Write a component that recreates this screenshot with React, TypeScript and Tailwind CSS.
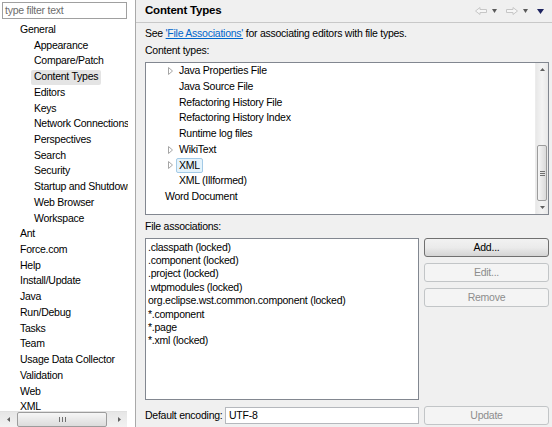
import React from 'react';

const prefs: [string, number][] = [
    ['General', 0],
    ['Appearance', 1],
    ['Compare/Patch', 1],
    ['Content Types', 1],
    ['Editors', 1],
    ['Keys', 1],
    ['Network Connections', 1],
    ['Perspectives', 1],
    ['Search', 1],
    ['Security', 1],
    ['Startup and Shutdown', 1],
    ['Web Browser', 1],
    ['Workspace', 1],
    ['Ant', 0],
    ['Force.com', 0],
    ['Help', 0],
    ['Install/Update', 0],
    ['Java', 0],
    ['Run/Debug', 0],
    ['Tasks', 0],
    ['Team', 0],
    ['Usage Data Collector', 0],
    ['Validation', 0],
    ['Web', 0],
    ['XML', 0],
];

// [label, level, hasChildren]
const contentTypes: [string, number, boolean][] = [
    ['Java Properties File', 1, true],
    ['Java Source File', 1, false],
    ['Refactoring History File', 1, false],
    ['Refactoring History Index', 1, false],
    ['Runtime log files', 1, false],
    ['WikiText', 1, true],
    ['XML', 1, true],
    ['XML (Illformed)', 1, false],
    ['Word Document', 0, false],
];

const associations = [
    '.classpath (locked)',
    '.component (locked)',
    '.project (locked)',
    '.wtpmodules (locked)',
    'org.eclipse.wst.common.component (locked)',
    '*.component',
    '*.page',
    '*.xml (locked)',
];

function Expander() {
    return (
        <svg width="5" height="8" viewBox="0 0 5 8" className="shrink-0">
            <polygon points="0.5,0.5 4.5,4 0.5,7.5" fill="#ffffff" stroke="#a6a6a6" strokeWidth="1" />
        </svg>
    );
}

function NavArrow({ dir }: { dir: 'left' | 'right' }) {
    const d = dir === 'left'
        ? 'M0.5,4 L5,0.5 L5,2.5 L11.5,2.5 L11.5,5.5 L5,5.5 L5,7.5 Z'
        : 'M11.5,4 L7,0.5 L7,2.5 L0.5,2.5 L0.5,5.5 L7,5.5 L7,7.5 Z';
    return (
        <svg width="12" height="8" viewBox="0 0 12 8">
            <path d={d} fill="#f6f6f6" stroke="#c6c6c6" strokeWidth="1" strokeLinejoin="round" />
        </svg>
    );
}

function SmallDown({ color = '#5a5a5a', w = 5 }: { color?: string; w?: number }) {
    return (
        <svg width={w} height={Math.ceil(w / 2) + 1} viewBox={`0 0 ${w} ${Math.ceil(w / 2) + 1}`}>
            <polygon points={`0,0 ${w},0 ${w / 2},${Math.ceil(w / 2) + 1}`} fill={color} />
        </svg>
    );
}

function HScrollbar() {
    return (
        <div className="flex h-[16px] w-[127px] bg-gradient-to-b from-[#e6e6e6] to-[#f2f2f2] border-t border-[#e0e0e0]">
            <div className="w-[17px] flex items-center justify-center">
                <svg width="3" height="5" viewBox="0 0 3 5"><polygon points="3,0 3,5 0,2.5" fill="#606060" /></svg>
            </div>
            <div className="w-[90px] h-[15px] rounded-[2px] border border-[#9c9c9c] bg-gradient-to-b from-[#f6f6f6] to-[#dcdcdc] flex items-center justify-center gap-[2px]">
                <div className="w-px h-[5px] bg-[#707070]" />
                <div className="w-px h-[5px] bg-[#707070]" />
                <div className="w-px h-[5px] bg-[#707070]" />
            </div>
            <div className="flex-1 flex items-center justify-end pr-[6px]">
                <svg width="3" height="5" viewBox="0 0 3 5"><polygon points="0,0 0,5 3,2.5" fill="#606060" /></svg>
            </div>
        </div>
    );
}

function VScrollbar() {
    return (
        <div className="w-[13px] flex flex-col bg-gradient-to-r from-[#e8e8e8] via-[#f4f4f4] to-[#e8e8e8] border-l border-[#ececec]">
            <div className="h-[13px] flex items-center justify-center">
                <svg width="5" height="3" viewBox="0 0 5 3"><polygon points="0,3 5,3 2.5,0" fill="#606060" /></svg>
            </div>
            <div className="flex-1" />
            <div className="h-[56px] mx-px rounded-[2px] border border-[#9c9c9c] bg-gradient-to-r from-[#f6f6f6] to-[#dadada] flex flex-col items-center justify-center gap-[1px]">
                <div className="h-px w-[5px] bg-[#707070]" />
                <div className="h-px w-[5px] bg-[#707070]" />
                <div className="h-px w-[5px] bg-[#707070]" />
            </div>
            <div className="h-[13px] flex items-center justify-center">
                <svg width="5" height="3" viewBox="0 0 5 3"><polygon points="0,0 5,0 2.5,3" fill="#606060" /></svg>
            </div>
        </div>
    );
}

function Button({ label, disabled }: { label: string; disabled?: boolean }) {
    return (
        <div
            className={
                disabled
                    ? 'h-[19px] rounded-[3px] border border-[#c2c5c7] bg-[#f4f4f4] text-[#8d8d8d] flex items-center justify-center'
                    : 'h-[19px] rounded-[3px] border border-[#707070] bg-gradient-to-b from-[#f2f2f2] via-[#ebebeb] to-[#d4d4d4] text-black flex items-center justify-center'
            }
        >
            {label}
        </div>
    );
}

export default function App() {
    return (
        <div className="flex h-[427px] w-[552px] overflow-hidden bg-[#f0f0f0] text-[10.5px] tracking-[-0.25px] text-black font-['Liberation_Sans',Arial,sans-serif]">
            {/* left: preference tree */}
            <div className="w-[136px] shrink-0 bg-white border-r border-[#a9a9a9] flex flex-col">
                <div className="mt-[2px] ml-[2px] w-[125px] h-[17px] border border-[#a0a0a0] flex items-center pl-[2px] text-[#6d6d6d]">
                    type filter text
                </div>
                <div className="mt-[3px] w-[128px] h-[392px] overflow-hidden">
                    {prefs.map(([name, level]) => (
                        <div key={name} className={`h-[15.72px] flex items-center whitespace-nowrap ${level === 0 ? 'pl-[20px]' : 'pl-[31px]'}`}>
                            {name === 'Content Types' ? (
                                <span className="h-[15px] flex items-center px-[3px] bg-[#e4e4e4] rounded-[2px]">{name}</span>
                            ) : (
                                <span className={level === 1 ? 'pl-[3px]' : ''}>{name}</span>
                            )}
                        </div>
                    ))}
                </div>
                <HScrollbar />
            </div>

            {/* right: page */}
            <div className="flex-1 flex flex-col">
                <div className="h-[23px] border-b border-[#c8c8c8] flex items-center pl-[9px] pr-[8px]">
                    <span className="font-bold text-[11.5px] tracking-[-0.2px]">Content Types</span>
                    <div className="ml-auto flex items-center">
                        <NavArrow dir="left" />
                        <div className="ml-[5px]"><SmallDown /></div>
                        <div className="ml-[9px]"><NavArrow dir="right" /></div>
                        <div className="ml-[5px]"><SmallDown /></div>
                        <div className="ml-[9px]"><SmallDown color="#1e2460" w={7} /></div>
                    </div>
                </div>

                <div className="pl-[9px] pr-[3px] flex flex-col">
                    <div className="mt-[3px] h-[16px] flex items-center">
                        See&nbsp;<span className="text-[#0066cc] underline">'File Associations'</span>&nbsp;for associating editors with file types.
                    </div>
                    <div className="mt-[1px] h-[16px] flex items-center">Content types:</div>

                    <div className="mt-[3px] h-[153px] bg-white border border-[#828790] flex">
                        <div className="flex-1 overflow-hidden">
                            {contentTypes.map(([name, level, kids]) => (
                                <div key={name} className={`h-[15.75px] flex items-center whitespace-nowrap ${level === 0 ? 'pl-[19px]' : 'pl-[22px]'}`}>
                                    {level === 1 && (
                                        <div className="w-[8px] flex items-center">{kids && <Expander />}</div>
                                    )}
                                    {name === 'XML' ? (
                                        <span className="h-[15px] flex items-center px-[2px] bg-[#e5f3fb] border border-[#a3cae6] rounded-[2px]">{name}</span>
                                    ) : (
                                        <span className={level === 1 ? 'pl-[3px]' : ''}>{name}</span>
                                    )}
                                </div>
                            ))}
                        </div>
                        <VScrollbar />
                    </div>

                    <div className="mt-[4px] h-[16px] flex items-center">File associations:</div>

                    <div className="mt-[3px] flex gap-[5px]">
                        <div className="flex-1 h-[162px] bg-white border border-[#828790] pt-[2px] pl-[2px]">
                            {associations.map((a) => (
                                <div key={a} className="h-[13.35px] flex items-center whitespace-nowrap">{a}</div>
                            ))}
                        </div>
                        <div className="w-[125px] flex flex-col gap-[6px]">
                            <Button label="Add..." />
                            <Button label="Edit..." disabled />
                            <Button label="Remove" disabled />
                        </div>
                    </div>

                    <div className="mt-[6px] flex items-center gap-[5px]">
                        <div className="flex-1 flex items-center">
                            <span className="w-[80px]">Default encoding:</span>
                            <div className="flex-1 h-[17px] bg-white border border-[#b5b8bd] flex items-center pl-[3px]">UTF-8</div>
                        </div>
                        <div className="w-[125px]">
                            <Button label="Update" disabled />
                        </div>
                    </div>
                </div>
            </div>
        </div>
    );
}
